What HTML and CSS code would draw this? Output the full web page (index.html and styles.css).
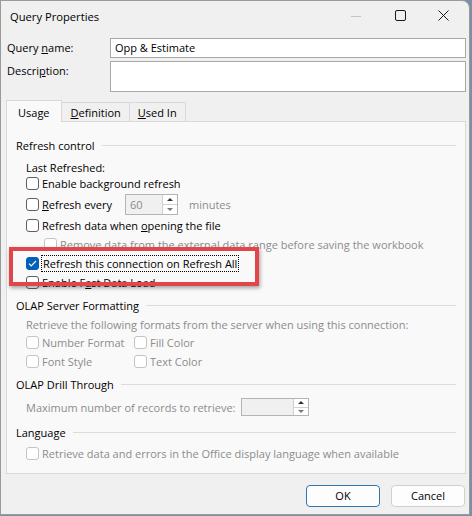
FILE: index.html
```html
<!DOCTYPE html>
<html lang="en">
<head>
  <meta charset="UTF-8" />
  <title>Query Properties</title>
  <link rel="stylesheet" href="styles.css">
</head>
<body>
  <div class="window">
    <div class="titlebar">
      <span class="title">Query Properties</span>
      <div class="caption">
        <span class="cap-btn min">
          <svg width="10" height="10" viewBox="0 0 10 10"><path d="M0 5.5h10" stroke="#c4c4c4" stroke-width="1"/></svg>
        </span>
        <span class="cap-btn max">
          <svg width="11" height="11" viewBox="0 0 11 11"><rect x="0.5" y="0.5" width="10" height="10" rx="1.5" fill="none" stroke="#1a1a1a" stroke-width="1"/></svg>
        </span>
        <span class="cap-btn close">
          <svg width="11" height="11" viewBox="0 0 11 11"><path d="M0.5 0.5l10 10M10.5 0.5l-10 10" stroke="#1a1a1a" stroke-width="1"/></svg>
        </span>
      </div>
    </div>

    <div class="content">
      <div class="field-row">
        <label class="field-label">Query <u>n</u>ame:</label>
        <div class="textbox">Opp &amp; Estimate</div>
      </div>
      <div class="field-row">
        <label class="field-label">Descri<u>p</u>tion:</label>
        <div class="textbox tall"></div>
      </div>

      <div class="tabs">
        <span class="tab active">Usa<u>g</u>e</span>
        <span class="tab"><u>D</u>efinition</span>
        <span class="tab"><u>U</u>sed In</span>
      </div>

      <div class="tab-page">
        <div class="group-title first">Refresh control</div>
        <div class="indent">
          <div class="line-text last">Last Refreshed:</div>
          <div class="check-row"><span class="box"></span><span>Enable back<u>g</u>round refresh</span></div>
          <div class="check-row spin-row">
            <span class="box"></span><span class="every"><u>R</u>efresh every</span>
            <span class="spinner small">
              <span class="spin-value">60</span>
              <span class="spin-arrows"><span class="arrow up"></span><span class="arrow down"></span></span>
            </span>
            <span class="muted minutes">minutes</span>
          </div>
          <div class="check-row tall-row"><span class="box"></span><span>Refresh data when <u>o</u>pening the file</span></div>
          <div class="check-row sub disabled"><span class="box"></span><span>Remove data from the external data range before saving the workbook</span></div>
          <div class="check-row">
            <span class="box checked">
              <svg width="9" height="7" viewBox="0 0 9 7"><path d="M1 3.6l2.2 2.2L8 1" fill="none" stroke="#fff" stroke-width="1.2"/></svg>
            </span>
            <span class="focus">Refresh this connection on Refresh All</span>
          </div>
          <div class="check-row"><span class="box"></span><span>Enable F<u>a</u>st Data Load</span></div>
        </div>

        <div class="group-title">OLAP Server Formatting</div>
        <div class="indent disabled">
          <div class="line-text short">Retrieve the following formats from the server when using this connection:</div>
          <div class="format-grid">
            <div class="check-row"><span class="box"></span><span>Number Format</span></div>
            <div class="check-row"><span class="box"></span><span>Fill Color</span></div>
            <div class="check-row"><span class="box"></span><span>Font Style</span></div>
            <div class="check-row"><span class="box"></span><span>Text Color</span></div>
          </div>
        </div>

        <div class="group-title">OLAP Drill Through</div>
        <div class="indent disabled">
          <div class="records-row">
            <span>Maximum number of records to retrieve:</span>
            <span class="spinner wide">
              <span class="spin-value"></span>
              <span class="spin-arrows"><span class="arrow up"></span><span class="arrow down"></span></span>
            </span>
          </div>
        </div>

        <div class="group-title">Language</div>
        <div class="indent disabled">
          <div class="check-row tall-row"><span class="box"></span><span>Retrieve data and errors in the Office display language when available</span></div>
        </div>
      </div>

      <div class="buttons">
        <span class="btn default">OK</span>
        <span class="btn">Cancel</span>
      </div>
    </div>

    <div class="callout"></div>
  </div>
</body>
</html>
```

FILE: styles.css
```css
body {
  margin: 0;
  background: #7b8fa6;
  font-family: "Open Sans", "Noto Sans", sans-serif;
  font-size: 11px;
  color: #000;
  width: 472px;
  height: 516px;
  overflow: hidden;
}

.window {
  position: relative;
  width: 468px;
  height: 513px;
  background: #f0f0f0;
  border: 1px solid #9a9a9a;
  border-radius: 0 8px 0 0;
}

.titlebar {
  height: 32px;
  display: flex;
  justify-content: space-between;
}

.title {
  padding: 8px 0 0 9px;
  font-size: 11.2px;
}

.caption {
  display: flex;
  padding-right: 6px;
}

.cap-btn {
  height: 29px;
  display: flex;
  align-items: center;
  justify-content: center;
}

.cap-btn.min {
  width: 45px;
}

.cap-btn.max {
  width: 45px;
}

.cap-btn.close {
  width: 40px;
}

.content {
  padding: 5px 3px 0 5px;
}

.field-row {
  display: flex;
  margin-bottom: 3px;
}

.field-label {
  box-sizing: border-box;
  width: 104px;
  padding: 2px 0 0 1px;
}

.textbox {
  flex: 1;
  height: 18px;
  line-height: 18px;
  padding-left: 4px;
  background: #fff;
  border: 1px solid #a8a8a8;
}

.textbox.tall {
  height: 29px;
}

.tabs {
  display: flex;
  align-items: flex-end;
  margin-top: 7px;
  height: 22px;
}

.tab {
  height: 18px;
  line-height: 20px;
  border: 1px solid #d9d9d9;
  border-bottom: none;
  background: #f0f0f0;
}

.tab.active {
  height: 21px;
  line-height: 23px;
  padding: 0 11px 0 11px;
  background: #f9f9f9;
  position: relative;
  top: 1px;
}

.tab:nth-child(2) {
  padding: 0 8px 0 9px;
  border-left: none;
}

.tab:nth-child(3) {
  padding: 0 8px 0 8px;
  border-left: none;
}

.tab-page {
  box-sizing: border-box;
  height: 353px;
  background: #f9f9f9;
  border: 1px solid #d9d9d9;
  padding: 12px 9px 0 9px;
}

.group-title {
  display: flex;
  align-items: center;
  gap: 7px;
  height: 22px;
  margin-top: 2px;
}

.group-title.first {
  margin-top: 0;
}

.group-title::after {
  content: "";
  flex: 1;
  border-top: 1px solid #dcdcdc;
}

.indent {
  padding-left: 10px;
}

.line-text {
  height: 18px;
  line-height: 18px;
}

.line-text.last {
  line-height: 24px;
}

.line-text.short {
  height: 17px;
}

.check-row {
  display: flex;
  align-items: center;
  height: 19px;
  white-space: nowrap;
}

.tall-row {
  height: 20px;
}

.box {
  width: 11px;
  height: 11px;
  border: 1px solid #5f5f5f;
  border-radius: 3px;
  background: #fff;
  margin-right: 3px;
  display: flex;
  align-items: center;
  justify-content: center;
  flex-shrink: 0;
}

.box.checked {
  background: #005fb8;
  border-color: #005fb8;
}

.disabled,
.muted {
  color: #8c8c8c;
}

.disabled .box {
  border-color: #c4c4c4;
}

.sub {
  padding-left: 18px;
}

.spin-row {
  height: 22px;
}

.every {
  width: 83px;
}

.spinner {
  display: flex;
  border: 1px solid #b4b4b4;
  background: #f0f0f0;
}

.spinner.small {
  width: 51px;
  height: 19px;
}

.spinner.wide {
  width: 66px;
  height: 16px;
}

.spin-value {
  flex: 1;
  padding-left: 4px;
  line-height: 19px;
  color: #8c8c8c;
}

.spin-arrows {
  width: 14px;
  display: flex;
  flex-direction: column;
  border-left: 1px solid #d0d0d0;
  background: #fff;
}

.arrow {
  flex: 1;
  display: flex;
  align-items: center;
  justify-content: center;
}

.arrow.up {
  border-bottom: 1px solid #d0d0d0;
}

.arrow.up::before {
  content: "";
  border: 3px solid transparent;
  border-bottom: 3px solid #333;
  border-top: none;
}

.arrow.down::before {
  content: "";
  border: 3px solid transparent;
  border-top: 3px solid #777;
  border-bottom: none;
}

.minutes {
  margin-left: 11px;
}

.focus {
  outline: 1px dotted #000;
  padding: 0 1px;
}

.format-grid {
  display: grid;
  grid-template-columns: 108px auto;
}

.records-row {
  display: flex;
  align-items: center;
  gap: 5px;
  height: 24px;
}

.buttons {
  display: flex;
  justify-content: flex-end;
  gap: 11px;
  margin-top: 11px;
  padding-right: 1px;
}

.btn {
  width: 72px;
  height: 20px;
  line-height: 20px;
  text-align: center;
  background: #fdfdfd;
  border: 1px solid #d0d0d0;
  border-radius: 4px;
}

.btn.default {
  border-color: #2f76b4;
}

/* red annotation box drawn over the dialog */
.callout {
  position: absolute;
  left: 8px;
  top: 246px;
  width: 242px;
  height: 31px;
  border: 4px solid #e0464a;
  box-shadow: 1px 2px 4px rgba(0, 0, 0, 0.35);
}
```
